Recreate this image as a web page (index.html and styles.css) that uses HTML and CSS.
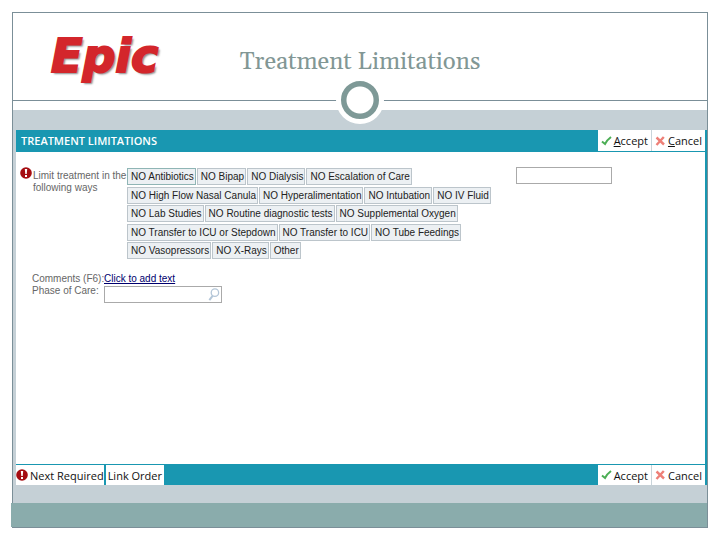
FILE: index.html
```html
<!DOCTYPE html>
<html lang="en">
	<head>
		<meta charset="utf-8" />
		<title>Treatment Limitations</title>
		<meta name="viewport" content="width=device-width, initial-scale=1" />
		<link rel="stylesheet" href="styles.css">
	</head>

	<body>
		<!-- shared icons -->
		<svg class="defs" aria-hidden="true">
			<symbol id="check" viewBox="0 0 11 10">
				<path d="M1 5.5 L4 8 Q6 4 10 1" fill="none" stroke="#4cae55" stroke-width="2" />
			</symbol>
			<symbol id="cross" viewBox="0 0 11 10">
				<path d="M1.5 1.5 L9 8.5 M8.8 1 L1.5 9" fill="none" stroke="#ee8078" stroke-width="2.4" />
			</symbol>
			<symbol id="alert" viewBox="0 0 12 12">
				<circle cx="6" cy="6" r="5.8" fill="#a50d12" />
				<path d="M4.8 2 H7.2 L6.7 7 H5.3 Z M5 8 H7 V10 H5 Z" fill="#fff" />
			</symbol>
		</svg>

		<div class="slide">
			<header class="slide-header">
				<div class="logo">Epic</div>
				<h1>Treatment Limitations</h1>
			</header>
			<div class="divider">
				<span class="ring"></span>
			</div>

			<main class="stage">
				<form class="panel">
					<div class="bar bar-top">
						<h2>TREATMENT LIMITATIONS</h2>
						<div class="actions">
							<button type="button"><svg class="icon"><use href="#check" /></svg><span><u>A</u>ccept</span></button>
							<button type="button"><svg class="icon"><use href="#cross" /></svg><span><u>C</u>ancel</span></button>
						</div>
					</div>

					<div class="content">
						<div class="limits">
							<svg class="alert"><use href="#alert" /></svg>
							<label class="limits-label" for="other-limit">Limit treatment in the<br>following ways</label>
							<div class="options">
								<div class="row">
									<button type="button" class="selected">NO Antibiotics</button>
									<button type="button">NO Bipap</button>
									<button type="button">NO Dialysis</button>
									<button type="button">NO Escalation of Care</button>
								</div>
								<div class="row">
									<button type="button">NO High Flow Nasal Canula</button>
									<button type="button">NO Hyperalimentation</button>
									<button type="button">NO Intubation</button>
									<button type="button">NO IV Fluid</button>
								</div>
								<div class="row">
									<button type="button">NO Lab Studies</button>
									<button type="button">NO Routine diagnostic tests</button>
									<button type="button">NO Supplemental Oxygen</button>
								</div>
								<div class="row">
									<button type="button">NO Transfer to ICU or Stepdown</button>
									<button type="button">NO Transfer to ICU</button>
									<button type="button">NO Tube Feedings</button>
								</div>
								<div class="row">
									<button type="button">NO Vasopressors</button>
									<button type="button">NO X-Rays</button>
									<button type="button">Other</button>
								</div>
							</div>
							<input type="text" class="other-limit" id="other-limit">
						</div>

						<div class="details">
							<span>Comments (F6):</span>
							<a href="#">Click to add text</a>
							<label for="phase">Phase of Care:</label>
							<div class="search">
								<input type="text" id="phase">
								<svg viewBox="0 0 12 14">
									<circle cx="7" cy="5" r="4" fill="none" stroke="#b4c6d8" stroke-width="1.4" />
									<path d="M4.5 8.5 L1 13" stroke="#b4c6d8" stroke-width="2.2" />
								</svg>
							</div>
						</div>
					</div>

					<div class="bar bar-bottom">
						<div class="steps">
							<button type="button"><svg class="alert"><use href="#alert" /></svg><span>Next Required</span></button>
							<button type="button">Link Order</button>
						</div>
						<div class="actions">
							<button type="button"><svg class="icon"><use href="#check" /></svg><span>Accept</span></button>
							<button type="button"><svg class="icon"><use href="#cross" /></svg><span>Cancel</span></button>
						</div>
					</div>
				</form>
			</main>
			<footer class="slide-footer"></footer>
		</div>
	</body>
</html>
```
FILE: styles.css
```css
* {
  box-sizing: border-box;
}
body {
  margin: 0;
  padding: 12px;
  min-height: 100vh;
  display: flex;
  background: #fff;
  font-family: "Liberation Sans", Arial, sans-serif;
  font-size: 10px;
  color: #222;
}
button,
input {
  font: inherit;
  color: inherit;
  margin: 0;
}
.defs {
  position: absolute;
  width: 0;
  height: 0;
}

/* slide frame */
.slide {
  flex: 1;
  display: flex;
  flex-direction: column;
  border: 1px solid #7b8f98;
}
.slide-header {
  height: 87px;
  display: grid;
  grid-template-columns: 1fr auto 1fr;
  align-items: center;
  padding-bottom: 2px;
}
.logo {
  padding-left: 38px;
  font: italic bold 46px/48px "DejaVu Sans", sans-serif;
  color: #d3262b;
  -webkit-text-stroke: 2px #d3262b;
  text-shadow: 2px 2px 2px #888;
}
h1 {
  margin: 0;
  padding-top: 12px;
  font: 24px/28px Georgia, Gelasio, "DejaVu Serif", serif;
  color: #829795;
}
.divider {
  position: relative;
  height: 10px;
  border-top: 1px solid #7b8f98;
}
.ring {
  position: absolute;
  left: 50%;
  top: -25px;
  width: 48px;
  height: 48px;
  margin-left: -24px;
  border: 5px solid #fff;
  border-radius: 50%;
  background: radial-gradient(circle, #fff 13px, #7e9997 14px);
}
.stage {
  flex: 1;
  display: flex;
  padding: 20px 0 18px 3px;
  background: #c5d0d6;
}
.slide-footer {
  height: 24px;
  margin-left: -2px;
  background: #8aacac;
}

/* order panel */
.panel {
  flex: 1;
  display: flex;
  flex-direction: column;
  border-right: 2px solid #1997b1;
  background: #fff;
}
.bar {
  display: flex;
  justify-content: space-between;
  background: #1997b1;
  font-family: "Open Sans", sans-serif;
  font-size: 11px;
}
.bar button {
  display: flex;
  align-items: center;
  gap: 2px;
  padding: 0 3px;
  border: 0;
  background: #fff;
  color: #111;
}
.bar-top {
  height: 22px;
  padding-bottom: 1px;
}
.bar-bottom {
  height: 21px;
  padding-top: 1px;
}
h2 {
  margin: 0;
  padding-left: 5px;
  font-size: 11px;
  line-height: 21px;
  font-weight: 600;
  color: #fff;
}
.actions,
.steps {
  display: flex;
}
.steps {
  gap: 2px;
}
.bar .steps button {
  padding: 0 2px;
}
.bar .steps button:first-child {
  padding: 0;
}
.actions button + button {
  border-left: 1px solid #c8d4da;
}
.icon {
  width: 11px;
  height: 10px;
}
.alert {
  width: 12px;
  height: 12px;
}

.content {
  flex: 1;
  padding: 15px 0 0 4px;
}
.limits {
  display: flex;
  align-items: flex-start;
}
.limits-label {
  width: 94px;
  padding: 3px 0 0 1px;
  line-height: 12px;
  white-space: nowrap;
  color: #666;
}
.options {
  width: 390px;
  height: 91px;
  margin-top: 1px;
  padding-left: 1px;
  display: flex;
  flex-direction: column;
  justify-content: space-between;
}
.row {
  display: flex;
  gap: 1px;
}
.row button {
  height: 17px;
  padding: 0 1px 0 3px;
  border: 1px solid #bcc5cb;
  background: #ecf0f3;
  line-height: 15px;
  white-space: nowrap;
}
.row .selected {
  border-color: #8fb5b5;
}
.other-limit {
  width: 96px;
  height: 17px;
  border: 1px solid #aaa;
}

.details {
  display: grid;
  grid-template-columns: 72px 118px;
  line-height: 12px;
  padding: 14px 0 0 12px;
  color: #666;
  white-space: nowrap;
}
.details a {
  color: #00006e;
}
.search {
  position: relative;
  padding-top: 1px;
}
.search input {
  display: block;
  width: 100%;
  height: 17px;
  border: 1px solid #aaa;
}
.search svg {
  position: absolute;
  right: 2px;
  top: 3px;
  width: 12px;
  height: 13px;
}
```
